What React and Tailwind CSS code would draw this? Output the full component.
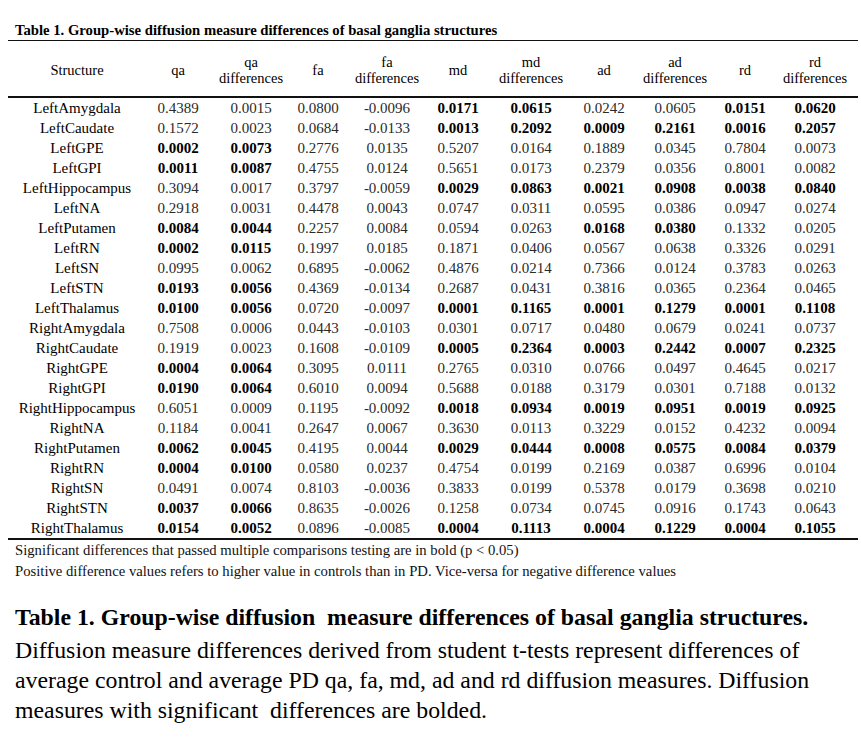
import React from "react";

// column widths tuned so each column's centre lines up with the figure
const cols = "grid-cols-[138px_64px_82px_52px_86px_56px_90px_56px_86px_54px_86px]";

const headers = [
  ["Structure"],
  ["qa"],
  ["qa", "differences"],
  ["fa"],
  ["fa", "differences"],
  ["md"],
  ["md", "differences"],
  ["ad"],
  ["ad", "differences"],
  ["rd"],
  ["rd", "differences"],
];

const measures = ["qa", "fa", "md", "ad", "rd"];

// name, values, which measure pairs are bold
const rows = [
  ["LeftAmygdala", "0.4389 0.0015 0.0800 -0.0096 0.0171 0.0615 0.0242 0.0605 0.0151 0.0620", "md rd"],
  ["LeftCaudate", "0.1572 0.0023 0.0684 -0.0133 0.0013 0.2092 0.0009 0.2161 0.0016 0.2057", "md ad rd"],
  ["LeftGPE", "0.0002 0.0073 0.2776 0.0135 0.5207 0.0164 0.1889 0.0345 0.7804 0.0073", "qa"],
  ["LeftGPI", "0.0011 0.0087 0.4755 0.0124 0.5651 0.0173 0.2379 0.0356 0.8001 0.0082", "qa"],
  ["LeftHippocampus", "0.3094 0.0017 0.3797 -0.0059 0.0029 0.0863 0.0021 0.0908 0.0038 0.0840", "md ad rd"],
  ["LeftNA", "0.2918 0.0031 0.4478 0.0043 0.0747 0.0311 0.0595 0.0386 0.0947 0.0274", ""],
  ["LeftPutamen", "0.0084 0.0044 0.2257 0.0084 0.0594 0.0263 0.0168 0.0380 0.1332 0.0205", "qa ad"],
  ["LeftRN", "0.0002 0.0115 0.1997 0.0185 0.1871 0.0406 0.0567 0.0638 0.3326 0.0291", "qa"],
  ["LeftSN", "0.0995 0.0062 0.6895 -0.0062 0.4876 0.0214 0.7366 0.0124 0.3783 0.0263", ""],
  ["LeftSTN", "0.0193 0.0056 0.4369 -0.0134 0.2687 0.0431 0.3816 0.0365 0.2364 0.0465", "qa"],
  ["LeftThalamus", "0.0100 0.0056 0.0720 -0.0097 0.0001 0.1165 0.0001 0.1279 0.0001 0.1108", "qa md ad rd"],
  ["RightAmygdala", "0.7508 0.0006 0.0443 -0.0103 0.0301 0.0717 0.0480 0.0679 0.0241 0.0737", ""],
  ["RightCaudate", "0.1919 0.0023 0.1608 -0.0109 0.0005 0.2364 0.0003 0.2442 0.0007 0.2325", "md ad rd"],
  ["RightGPE", "0.0004 0.0064 0.3095 0.0111 0.2765 0.0310 0.0766 0.0497 0.4645 0.0217", "qa"],
  ["RightGPI", "0.0190 0.0064 0.6010 0.0094 0.5688 0.0188 0.3179 0.0301 0.7188 0.0132", "qa"],
  ["RightHippocampus", "0.6051 0.0009 0.1195 -0.0092 0.0018 0.0934 0.0019 0.0951 0.0019 0.0925", "md ad rd"],
  ["RightNA", "0.1184 0.0041 0.2647 0.0067 0.3630 0.0113 0.3229 0.0152 0.4232 0.0094", ""],
  ["RightPutamen", "0.0062 0.0045 0.4195 0.0044 0.0029 0.0444 0.0008 0.0575 0.0084 0.0379", "qa md ad rd"],
  ["RightRN", "0.0004 0.0100 0.0580 0.0237 0.4754 0.0199 0.2169 0.0387 0.6996 0.0104", "qa"],
  ["RightSN", "0.0491 0.0074 0.8103 -0.0036 0.3833 0.0199 0.5378 0.0179 0.3698 0.0210", ""],
  ["RightSTN", "0.0037 0.0066 0.8635 -0.0026 0.1258 0.0734 0.0745 0.0916 0.1743 0.0643", "qa"],
  ["RightThalamus", "0.0154 0.0052 0.0896 -0.0085 0.0004 0.1113 0.0004 0.1229 0.0004 0.1055", "qa md ad rd"],
];

const App = () => {
  return (
    <div className="w-[861px] h-[751px] bg-white text-black font-[family-name:'Liberation_Serif','Times_New_Roman',serif] overflow-hidden">
      {/* Table title */}
      <div className="pt-[21px] pl-[15px] text-[14.7px] font-bold leading-[19px] whitespace-nowrap">
        Table 1. Group-wise diffusion measure differences of basal ganglia structures
      </div>

      <div className="ml-[8px] w-[850px] border-t border-[#111]">
        {/* Header */}
        <div className={`grid ${cols} h-[57px] border-b-2 border-[#111] text-[14.5px] leading-[16px]`}>
          {headers.map((h, i) => (
            <div key={i} className="flex flex-col items-center justify-center text-center pt-[2px]">
              {h.map((t) => (
                <span key={t}>{t}</span>
              ))}
            </div>
          ))}
        </div>

        {/* Body */}
        <div className="border-b-2 border-[#111] text-[15px]">
          {rows.map(([name, vals, bold]) => {
            const v = vals.split(" ");
            const b = bold.split(" ");
            return (
              <div key={name} className={`grid ${cols} h-[20px] leading-[20px]`}>
                <div className="text-center">{name}</div>
                {v.map((n, i) => (
                  <div
                    key={i}
                    className={`text-center ${b.includes(measures[Math.floor(i / 2)]) ? "font-bold text-black" : "text-[#2a2a2a]"}`}
                  >
                    {n}
                  </div>
                ))}
              </div>
            );
          })}
        </div>
      </div>

      {/* Footnotes */}
      <div className="pl-[15px] text-[14.7px] leading-[21px] text-[#111] whitespace-nowrap">
        <div>Significant differences that passed multiple comparisons testing are in bold (p &lt; 0.05)</div>
        <div>Positive difference values refers to higher value in controls than in PD. Vice-versa for negative difference values</div>
      </div>

      {/* Caption */}
      <div className="mt-[20px] pl-[15px] text-[23.8px] leading-[30px] whitespace-nowrap">
        <div className="font-bold mb-[3px]">Table 1. Group-wise diffusion&nbsp; measure differences of basal ganglia structures.</div>
        <div>Diffusion measure differences derived from student t-tests represent differences of</div>
        <div>average control and average PD qa, fa, md, ad and rd diffusion measures. Diffusion</div>
        <div>measures with significant&nbsp; differences are bolded.</div>
      </div>
    </div>
  );
};

export default App;
